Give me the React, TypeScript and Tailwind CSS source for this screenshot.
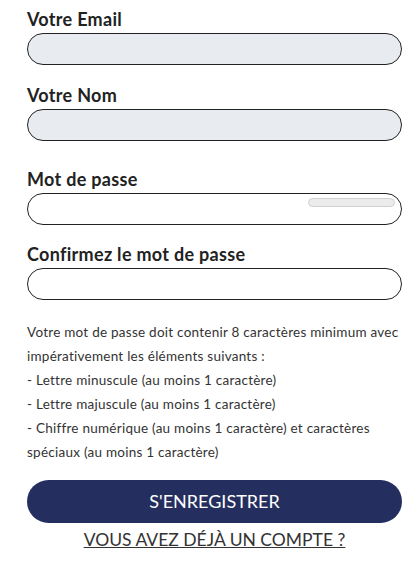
import React from "react";

function Field({ label, filled, strength, className }: { label: string; filled?: boolean; strength?: boolean; className?: string }) {
    return (
        <div className={className}>
            <label className="block text-[18px] font-bold leading-[20px] tracking-[0.3px] text-[#222]">{label}</label>
            <div
                className={`relative mt-[4px] h-[32px] rounded-full border border-[#222] ${filled ? "bg-[#e8ebef]" : "bg-white"}`}
            >
                {strength && (
                    <div className="absolute right-[6px] top-[4px] h-[9px] w-[87px] rounded-full border border-[#d0d0d0] bg-[#ececec]" />
                )}
            </div>
        </div>
    );
}

export default function App() {
    return (
        <div className="min-h-screen bg-white pl-[27px] pr-[17px] pt-[9px] text-[#222]" style={{ fontFamily: "Lato, 'Noto Sans', sans-serif" }}>
            <Field label="Votre Email" filled />
            <Field label="Votre Nom" filled className="mt-[20px]" />
            <Field label="Mot de passe" strength className="mt-[28px]" />
            <Field label="Confirmez le mot de passe" className="mt-[19px]" />

            <div className="mt-[20px] text-[13.5px] leading-[24px] tracking-[0.25px] text-[#333]">
                <p>Votre mot de passe doit contenir 8 caractères minimum avec impérativement les éléments suivants :</p>
                <p>- Lettre minuscule (au moins 1 caractère)</p>
                <p>- Lettre majuscule (au moins 1 caractère)</p>
                <p>- Chiffre numérique (au moins 1 caractère) et caractères spéciaux (au moins 1 caractère)</p>
            </div>

            <button className="mt-[16px] flex h-[43px] w-full items-center justify-center rounded-full bg-[#252f5f] text-[18px] text-white">
                S'ENREGISTRER
            </button>
            <div className="mt-[4px] text-center">
                <a href="#" className="text-[17.5px] text-[#333] underline">
                    VOUS AVEZ DÉJÀ UN COMPTE ?
                </a>
            </div>
        </div>
    );
}
